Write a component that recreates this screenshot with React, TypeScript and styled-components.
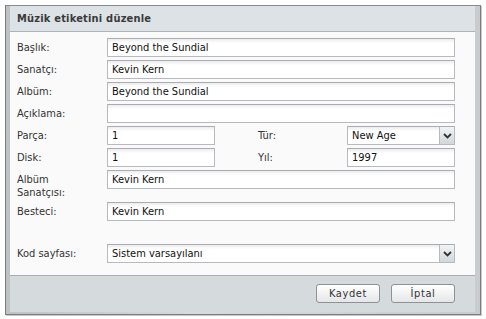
import React from "react";
import styled, { createGlobalStyle } from "styled-components";

const Global = createGlobalStyle`
  html, body { margin: 0; padding: 0; background: #ffffff; }
  body { font-family: "DejaVu Sans Condensed", "DejaVu Sans", Verdana, sans-serif; font-stretch: condensed; font-size: 11px; color: #222; }
  * { box-sizing: border-box; }
`;

const Stage = styled.div`
  padding: 5px;
  width: 486px;
  height: 319px;
`;

const Window = styled.div`
  width: 476px;
  height: 310px;
  border: 1px solid #7d7d7d;
  border-top-color: #8a8a8a;
  background: linear-gradient(to right, #bfc2c5, #d7d9db 40%, #c9ccce);
  padding: 0 5px 2px 4px;
  display: flex;
  flex-direction: column;
  box-shadow: 1px 1px 0 #c8c8c8;
`;

const TitleBar = styled.div`
  height: 26px;
  flex: none;
  background: #dde2e6;
  border-bottom: 1px solid #aeb3b7;
  display: flex;
  align-items: center;
  padding-left: 7px;
  font-weight: bold;
  font-size: 11px;
  color: #3a3a3a;
  letter-spacing: 0.2px;
`;

const Body = styled.div`
  flex: 1;
  background: #fafafa;
  padding: 6px 20px 0 7px;
  display: flex;
  flex-direction: column;
`;

const Row = styled.div<{ $gap?: number }>`
  display: grid;
  grid-template-columns: 90px 1fr;
  align-items: start;
  margin-bottom: ${(p) => (p.$gap ?? 3)}px;
`;

const SplitRow = styled.div`
  display: grid;
  grid-template-columns: 90px 108px 43px 89px 1fr;
  align-items: start;
  margin-bottom: 3px;
`;

const Label = styled.div<{ $multi?: boolean }>`
  padding-top: 3px;
  line-height: ${(p) => (p.$multi ? 13 : 14)}px;
  color: #333;
`;

const Input = styled.div`
  height: 19px;
  border: 1px solid #b6babe;
  border-top-color: #a9adb1;
  background: linear-gradient(to bottom, #ececec 0px, #ffffff 4px, #ffffff 100%);
  padding: 0 4px 0 4px;
  display: flex;
  align-items: center;
  color: #111;
  white-space: nowrap;
`;

const Select = styled(Input)`
  padding-right: 0;
  justify-content: space-between;
`;

const DropButton = styled.div`
  width: 15px;
  height: 17px;
  border-left: 1px solid #b6babe;
  background: linear-gradient(to bottom, #f2f3f4, #d3d7da);
  display: flex;
  align-items: center;
  justify-content: center;
`;

const Spacer = styled.div`
  height: 20px;
`;

const Footer = styled.div`
  height: 37px;
  flex: none;
  background: #d5dadd;
  border-top: 1px solid #a8adb1;
  display: flex;
  justify-content: flex-end;
  align-items: flex-start;
  padding: 8px 20px 0 0;
  gap: 11px;
`;

const Button = styled.div`
  width: 64px;
  height: 19px;
  border: 1px solid #8e9295;
  border-radius: 3px;
  background: linear-gradient(to bottom, #ffffff, #e4e6e8);
  display: flex;
  align-items: center;
  justify-content: center;
  color: #333;
  letter-spacing: 0.6px;
`;

const Chevron = () => (
  <svg width="9" height="6" viewBox="0 0 9 6">
    <path d="M1 1 L4.5 4.5 L8 1" stroke="#333" strokeWidth="1.8" fill="none" />
  </svg>
);

export default function App() {
  return (
    <Stage>
      <Global />
      <Window>
        <TitleBar>Müzik etiketini düzenle</TitleBar>
        <Body>
          <Row>
            <Label>Başlık:</Label>
            <Input>Beyond the Sundial</Input>
          </Row>
          <Row>
            <Label>Sanatçı:</Label>
            <Input>Kevin Kern</Input>
          </Row>
          <Row>
            <Label>Albüm:</Label>
            <Input>Beyond the Sundial</Input>
          </Row>
          <Row>
            <Label>Açıklama:</Label>
            <Input />
          </Row>
          <SplitRow>
            <Label>Parça:</Label>
            <Input>1</Input>
            <span />
            <Label>Tür:</Label>
            <Select>
              New Age
              <DropButton>
                <Chevron />
              </DropButton>
            </Select>
          </SplitRow>
          <SplitRow>
            <Label>Disk:</Label>
            <Input>1</Input>
            <span />
            <Label>Yıl:</Label>
            <Input>1997</Input>
          </SplitRow>
          <Row>
            <Label $multi>
              Albüm
              <br />
              Sanatçısı:
            </Label>
            <Input>Kevin Kern</Input>
          </Row>
          <Row>
            <Label>Besteci:</Label>
            <Input>Kevin Kern</Input>
          </Row>
          <Spacer />
          <Row>
            <Label>Kod sayfası:</Label>
            <Select>
              Sistem varsayılanı
              <DropButton>
                <Chevron />
              </DropButton>
            </Select>
          </Row>
        </Body>
        <Footer>
          <Button>Kaydet</Button>
          <Button>İptal</Button>
        </Footer>
      </Window>
    </Stage>
  );
}
